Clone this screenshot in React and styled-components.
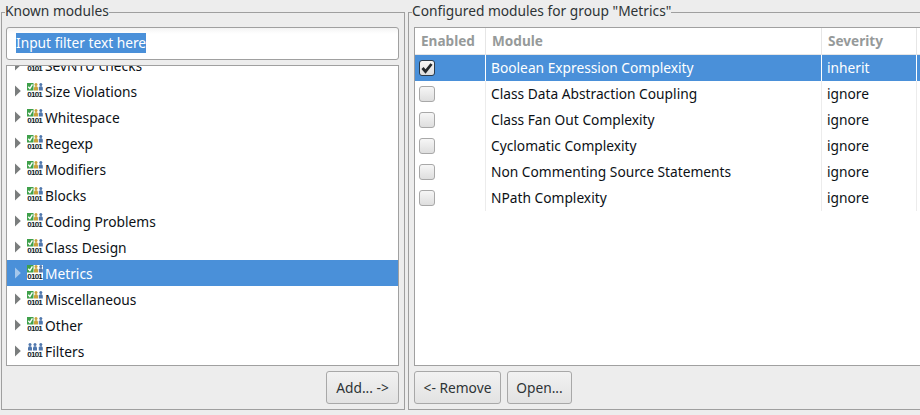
import React from "react";
import styled, { createGlobalStyle } from "styled-components";

const Global = createGlobalStyle`
  html, body { margin: 0; padding: 0; width: 920px; height: 415px; overflow: hidden; background: #ededed; }
  * { box-sizing: border-box; }
`;

const Page = styled.div`
  display: flex;
  width: 920px;
  height: 415px;
  padding: 0 0 5px 1px;
  gap: 3px;
  overflow: hidden;
  background: #ededed;
  color: #2e3436;
  font: 13.75px "Noto Sans", "Open Sans", sans-serif;
`;

const Group = styled.fieldset`
  flex: ${(p) => (p.$wide ? "0 0 540px" : "0 0 404px")};
  display: flex;
  flex-direction: column;
  min-width: 0;
  margin: 0;
  padding: 3px 5px 5px ${(p) => (p.$wide ? "5px" : "4px")};
  height: 410px;
  border: 1px solid #9f9f9f;
`;

const Legend = styled.legend`
  margin-left: ${(p) => (p.$wide ? "-2px" : "-1px")};
  padding: 0;
  height: 24px;
  line-height: 22px;
  color: #2e3436;
`;

const FilterBox = styled.div`
  height: 33px;
  flex: none;
  display: flex;
  align-items: center;
  padding: 0 0 1px 9px;
  background: linear-gradient(#f4f4f4, #fff 6px);
  border: 1px solid #a0a0a0;
  border-radius: 3px;
`;

const Selected = styled.span`
  background: #4a90d9;
  color: #fff;
  line-height: 20px;
`;

const TreeFrame = styled.div`
  margin-top: 5px;
  height: 301px;
  flex: none;
  overflow: hidden;
  background: #fff;
  border: 1px solid #a0a0a0;
`;

const TreeList = styled.div`
  margin-top: -14px;
`;

const TreeRow = styled.div`
  display: flex;
  align-items: center;
  height: 26px;
  padding-left: 6px;
  gap: 4px;
  color: ${(p) => (p.$selected ? "#fff" : "#0c1116")};
  background: ${(p) => (p.$selected ? "#4a90d9" : "transparent")};
`;

const Arrow = styled.svg`
  flex: none;
  width: 10px;
  height: 12px;
  fill: ${(p) => (p.$selected ? "#a5c8ec" : "#7a7d7d")};
`;

const RowIcon = styled.svg`
  flex: none;
  width: 16px;
  height: 16px;
`;

const RowLabel = styled.span`
  margin-left: -2px;
  white-space: nowrap;
`;

const ButtonBar = styled.div`
  display: flex;
  gap: 6px;
  margin-top: 5px;
  justify-content: ${(p) => (p.$end ? "flex-end" : "flex-start")};
`;

const Button = styled.div`
  height: 33px;
  width: ${(p) => p.$w}px;
  display: flex;
  align-items: center;
  justify-content: center;
  padding-bottom: 1px;
  border: 1px solid #a8a8a8;
  border-radius: 3px;
  background: linear-gradient(#f2f2f2, #e2e2e2);
  color: #2e3436;
  white-space: nowrap;
`;

const TableFrame = styled.div`
  height: 339px;
  flex: none;
  width: 560px;
  background: #fff;
  border: 1px solid #a0a0a0;
`;

const Grid = styled.div`
  display: grid;
  grid-template-columns: 71px 336px 95px 60px;
  grid-template-rows: 27px;
  grid-auto-rows: 26px;
  width: 562px;
`;

const HeadCell = styled.div`
  display: flex;
  align-items: center;
  padding: 0 0 2px 6px;
  font-weight: 700;
  font-size: 13.6px;
  color: #969a9a;
  border-right: 1px solid #e6e6e6;
  border-bottom: 1px solid #e6e6e6;
`;

const Cell = styled.div`
  display: flex;
  align-items: center;
  padding: 0 0 1px ${(p) => (p.$check ? "4px" : "5px")};
  color: ${(p) => (p.$selected ? "#fff" : "#0c1116")};
  background: ${(p) => (p.$selected ? "#4a90d9" : "#fff")};
  border-right: 1px solid ${(p) => (p.$selected ? "#fff" : "#ececec")};
  white-space: nowrap;
`;

const Box = styled.div`
  width: 16px;
  height: 16px;
  border-radius: 3px;
  border: 1px solid ${(p) => (p.$on ? "#2c3b4a" : "#a8a8a8")};
  background: linear-gradient(#f6f6f6, #dedede);
  display: flex;
  align-items: center;
  justify-content: center;
`;

const CheckMark = styled.svg`
  width: 12px;
  height: 12px;
  fill: none;
  stroke: #23282c;
  stroke-width: 2.8;
`;

const Figure = ({ x, c }) => (
  <g>
    <circle cx={x + 2} cy="1.6" r="1.5" fill={c} />
    <path d={`M${x} 7.5V4.4L${x + 1} 3.2H${x + 3}L${x + 4} 4.4V7.5Z`} fill={c} />
  </g>
);

const ModuleIcon = ({ plain }) => (
  <RowIcon viewBox="0 0 16 16" aria-hidden="true">
    <rect x="0" y="0" width="16" height="15" fill="#fff" />
    {plain ? (
      <Figure x={1} c="#4f77ad" />
    ) : (
      <g>
        <rect x="0" y="0" width="6.5" height="7.5" fill="#3fa04a" />
        <path d="M1.3 3.8L2.9 5.6L5.4 1.4" stroke="#fff" strokeWidth="1.4" fill="none" />
      </g>
    )}
    <Figure x={plain ? 6 : 7} c={plain ? "#4f77ad" : "#c9a23a"} />
    <Figure x={11.8} c="#4f77ad" />
    <text x="0.2" y="14.2" fontFamily="Liberation Sans, sans-serif" fontWeight="700" fontSize="8" textLength="15.6" lengthAdjust="spacing" fill="#111d2a">0101</text>
  </RowIcon>
);

const TreeItem = ({ label, selected, plain }) => (
  <TreeRow $selected={selected}>
    <Arrow $selected={selected} viewBox="0 0 10 12" aria-hidden="true">
      <path d="M2 .5L7.8 6L2 11.5Z" />
    </Arrow>
    <ModuleIcon plain={plain} />
    <RowLabel>{label}</RowLabel>
  </TreeRow>
);

const groups = ["SevNTU checks", "Size Violations", "Whitespace", "Regexp", "Modifiers", "Blocks", "Coding Problems", "Class Design", "Metrics", "Miscellaneous", "Other", "Filters"];

const modules = [
  ["Boolean Expression Complexity", "inherit"],
  ["Class Data Abstraction Coupling", "ignore"],
  ["Class Fan Out Complexity", "ignore"],
  ["Cyclomatic Complexity", "ignore"],
  ["Non Commenting Source Statements", "ignore"],
  ["NPath Complexity", "ignore"],
];

export default function App() {
  return (
    <Page>
      <Global />
      <Group>
        <Legend>Known modules</Legend>
        <FilterBox><Selected>Input filter text here</Selected></FilterBox>
        <TreeFrame>
          <TreeList>
            {groups.map((g) => (
              <TreeItem key={g} label={g} selected={g === "Metrics"} plain={g === "Filters"} />
            ))}
          </TreeList>
        </TreeFrame>
        <ButtonBar $end><Button $w={73}>Add... -&gt;</Button></ButtonBar>
      </Group>
      <Group $wide>
        <Legend $wide>Configured modules for group "Metrics"</Legend>
        <TableFrame>
          <Grid>
            <HeadCell>Enabled</HeadCell>
            <HeadCell>Module</HeadCell>
            <HeadCell>Severity</HeadCell>
            <HeadCell />
            {modules.map(([name, severity], i) => (
              <React.Fragment key={name}>
                <Cell $check $selected={i === 0}>
                  <Box $on={i === 0}>
                    {i === 0 && (
                      <CheckMark viewBox="0 0 12 12" aria-hidden="true"><path d="M1.5 6L4.5 9.5L10.5 2" /></CheckMark>
                    )}
                  </Box>
                </Cell>
                <Cell $selected={i === 0}>{name}</Cell>
                <Cell $selected={i === 0}>{severity}</Cell>
                <Cell $selected={i === 0} />
              </React.Fragment>
            ))}
          </Grid>
        </TableFrame>
        <ButtonBar>
          <Button $w={87}>&lt;- Remove</Button>
          <Button $w={65}>Open...</Button>
        </ButtonBar>
      </Group>
    </Page>
  );
}
